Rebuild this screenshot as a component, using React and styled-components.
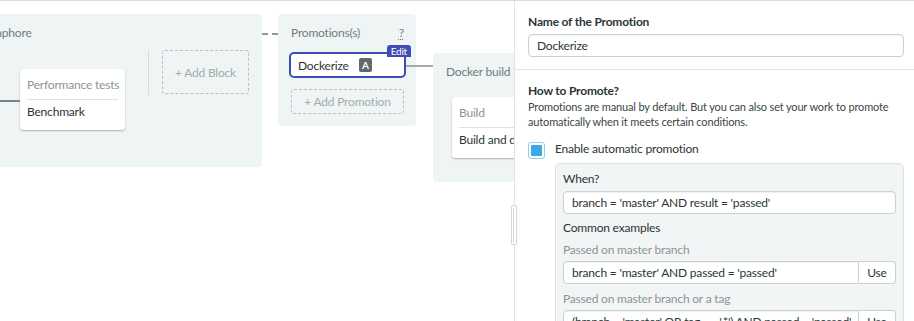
import React from 'react';
import styled, { createGlobalStyle } from 'styled-components';

const GlobalStyle = createGlobalStyle`
body {
  margin: 0;
  font-family: Lato, "Noto Sans", sans-serif;
  font-size: 12px;
  letter-spacing: -0.2px;
  color: #2b3535;
  background: #fff;
  overflow: hidden;
}
`;

const Page = styled.div`
  position: relative;
  display: flex;
  width: 914px;
  height: 321px;
  border-top: 1px solid #d5dcdc;
  box-sizing: border-box;
  overflow: hidden;
`;

const Canvas = styled.div`
  flex: 1;
  display: flex;
  align-items: flex-start;
  padding-top: 13px;
  overflow: hidden;
`;

const Block = styled.div`
  flex: none;
  background: #eff4f4;
  border-radius: 4px;
  width: ${p => p.$width}px;
  height: ${p => p.$height}px;
  margin-top: ${p => p.$top || 0}px;
  margin-left: ${p => p.$left || 0}px;
  padding: 11px 12px 0 13px;
  box-sizing: border-box;
`;

const BlockTitle = styled.div`
  display: flex;
  justify-content: space-between;
  color: #6f7d7d;
  line-height: 16px;
  white-space: nowrap;
`;

const Help = styled.span`
  color: #6f7d7d;
  text-decoration: underline dotted;
  text-underline-offset: 2px;
`;

const Connector = styled.div`
  flex: none;
  width: ${p => p.$width}px;
  margin-top: ${p => p.$top}px;
  margin-left: ${p => p.$left || 0}px;
  border-top: 2px ${p => (p.$dashed ? 'dashed' : 'solid')} ${p => p.$color};
  position: relative;
  z-index: 1;
`;

const JobRow = styled.div`
  display: flex;
  align-items: flex-start;
  margin-top: ${p => p.$top}px;
  margin-left: ${p => p.$left || 0}px;
`;

const Card = styled.div`
  flex: none;
  width: ${p => p.$width}px;
  background: #fff;
  border-radius: 3px;
  box-shadow: 0 1px 2px rgba(0, 0, 0, 0.28);
  padding: 0 7px;
  margin-top: ${p => p.$top || 0}px;
  margin-left: ${p => p.$left || 0}px;
  box-sizing: border-box;
`;

const CardTitle = styled.div`
  color: #8a9696;
  line-height: 16px;
  padding: 8px 0 6px;
  border-bottom: 1px solid #dde3e3;
  white-space: nowrap;
`;

const Job = styled.div`
  line-height: 16px;
  padding: 4px 0 10px;
  white-space: nowrap;
`;

const Separator = styled.div`
  flex: none;
  width: 1px;
  height: 45px;
  background: #d6dddd;
  margin: 0 13px 0 23px;
`;

const DashedBox = styled.div`
  flex: none;
  display: flex;
  align-items: center;
  justify-content: center;
  width: ${p => (p.$width ? `${p.$width}px` : 'auto')};
  height: ${p => p.$height}px;
  margin-top: ${p => p.$top || 0}px;
  border: 1.5px dashed #b9c2c2;
  border-radius: 3px;
  color: #a3adad;
  box-sizing: border-box;
`;

const Promotion = styled.div`
  position: relative;
  display: flex;
  align-items: center;
  gap: 10px;
  height: 26px;
  margin: 11px -2px 0;
  padding: 0 7px;
  border: 2px solid #3e4db3;
  border-radius: 5px;
  background: #fff;
  box-sizing: border-box;
`;

const Badge = styled.span`
  display: inline-flex;
  align-items: center;
  justify-content: center;
  width: 13px;
  height: 14px;
  background: #5f6a6a;
  color: #fff;
  font-size: 10px;
  font-weight: 700;
  border-radius: 2px;
`;

const EditTag = styled.span`
  position: absolute;
  top: -9px;
  right: -7px;
  background: #3e4db3;
  color: #fff;
  font-size: 10px;
  line-height: 12px;
  padding: 0 4px;
  border-radius: 3px 3px 0 0;
`;

const Handle = styled.div`
  position: absolute;
  left: 511px;
  top: 204px;
  width: 4px;
  height: 38px;
  border: 1px solid #cfd7d7;
  border-radius: 2px;
  background: #fff;
  z-index: 2;
  &::after {
    content: '';
    position: absolute;
    left: 1px;
    top: 2px;
    bottom: 2px;
    width: 1px;
    background: #cfd7d7;
  }
`;

const Sidebar = styled.div`
  flex: none;
  width: 400px;
  border-left: 1px solid #dfe5e5;
  box-sizing: border-box;
`;

const Section = styled.div`
  padding: ${p => p.$pad};
  border-bottom: ${p => (p.$divider ? '1px solid #dfe5e5' : 'none')};
`;

const Label = styled.div`
  font-weight: 700;
  line-height: 16px;
  margin-bottom: ${p => p.$gap || 0}px;
`;

const Text = styled.p`
  margin: 0;
  font-size: 11px;
  letter-spacing: -0.15px;
  line-height: 15px;
  color: #3a4646;
`;

const Input = styled.div`
  height: 23px;
  display: flex;
  align-items: center;
  padding: 0 8px;
  background: #fff;
  border: 1px solid #c9d1d1;
  border-radius: ${p => p.$radius || '4px'};
  box-shadow: inset 0 1px 1px rgba(0, 0, 0, 0.06);
  box-sizing: border-box;
  white-space: nowrap;
  overflow: hidden;
  flex: 1;
  min-width: 0;
`;

const CheckRow = styled.div`
  display: flex;
  align-items: flex-start;
  gap: 10px;
  margin-top: 13px;
`;

const Checkbox = styled.span`
  flex: none;
  width: 17px;
  height: 17px;
  padding: 2px;
  border: 1px solid #9ccbe8;
  border-radius: 3px;
  box-sizing: border-box;
  &::after {
    content: '';
    display: block;
    width: 100%;
    height: 100%;
    background: #3ba9e6;
    border-radius: 1px;
  }
`;

const CheckBody = styled.div`
  flex: 1;
  min-width: 0;
`;

const CheckLabel = styled.div`
  line-height: 12px;
  margin-top: 1px;
`;

const Panel = styled.div`
  margin-top: 8px;
  background: #f1f5f5;
  border: 1px solid #dbe2e2;
  border-radius: 5px;
  padding: 7px 7px 10px;
`;

const PanelLabel = styled.div`
  line-height: 16px;
  color: ${p => (p.$muted ? '#8a9696' : '#2b3535')};
  margin: ${p => p.$margin};
`;

const Example = styled.div`
  margin-bottom: 7px;
`;

const InputGroup = styled.div`
  display: flex;
`;

const UseButton = styled.div`
  flex: none;
  width: 37px;
  height: 23px;
  display: flex;
  align-items: center;
  justify-content: center;
  border: 1px solid #c9d1d1;
  border-left: none;
  border-radius: 0 4px 4px 0;
  background: #fff;
  box-sizing: border-box;
`;

const examples = [
  { title: 'Passed on master branch', value: "branch = 'master' AND passed = 'passed'" },
  { title: 'Passed on master branch or a tag', value: "(branch = 'master' OR tag =~ '.*') AND passed = 'passed'" },
];

export default function App() {
  return (
    <>
      <GlobalStyle />
      <Page>
        <Canvas>
          <Block $width={301} $height={153} $left={-39}>
            <BlockTitle>Semaphore</BlockTitle>
            <JobRow $top={9} $left={26}>
              <Connector $width={20} $top={50} $color="#7b8585" />
              <Card $width={105} $top={19}>
                <CardTitle>Performance tests</CardTitle>
                <Job>Benchmark</Job>
              </Card>
              <Separator />
              <DashedBox $width={87} $height={44}>+ Add Block</DashedBox>
            </JobRow>
          </Block>
          <Connector $width={16} $top={19} $dashed $color="#8e9999" />
          <Block $width={138} $height={112}>
            <BlockTitle>
              <span>Promotions(s)</span>
              <Help>?</Help>
            </BlockTitle>
            <Promotion>
              Dockerize
              <Badge>A</Badge>
              <EditTag>Edit</EditTag>
            </Promotion>
            <DashedBox $height={25} $top={11}>+ Add Promotion</DashedBox>
          </Block>
          <Connector $width={27} $top={51} $left={-10} $color="#a0aaaa" />
          <Block $width={120} $height={129} $top={39}>
            <BlockTitle>Docker build</BlockTitle>
            <Card $width={120} $top={17} $left={6}>
              <CardTitle>Build</CardTitle>
              <Job>Build and deploy</Job>
            </Card>
          </Block>
        </Canvas>
        <Handle />
        <Sidebar>
          <Section $pad="13px 10px 12px 13px" $divider>
            <Label $gap={4}>Name of the Promotion</Label>
            <Input>Dockerize</Input>
          </Section>
          <Section $pad="13px 10px 0 13px">
            <Label>How to Promote?</Label>
            <Text>
              Promotions are manual by default. But you can also set your work to promote
              automatically when it meets certain conditions.
            </Text>
            <CheckRow>
              <Checkbox />
              <CheckBody>
                <CheckLabel>Enable automatic promotion</CheckLabel>
                <Panel>
                  <PanelLabel $margin="0 0 4px">When?</PanelLabel>
                  <Input>branch = 'master' AND result = 'passed'</Input>
                  <PanelLabel $margin="6px 0 6px">Common examples</PanelLabel>
                  {examples.map(ex => (
                    <Example key={ex.title}>
                      <PanelLabel $muted $margin="0 0 3px">{ex.title}</PanelLabel>
                      <InputGroup>
                        <Input $radius="4px 0 0 4px">{ex.value}</Input>
                        <UseButton>Use</UseButton>
                      </InputGroup>
                    </Example>
                  ))}
                </Panel>
              </CheckBody>
            </CheckRow>
          </Section>
        </Sidebar>
      </Page>
    </>
  );
}
